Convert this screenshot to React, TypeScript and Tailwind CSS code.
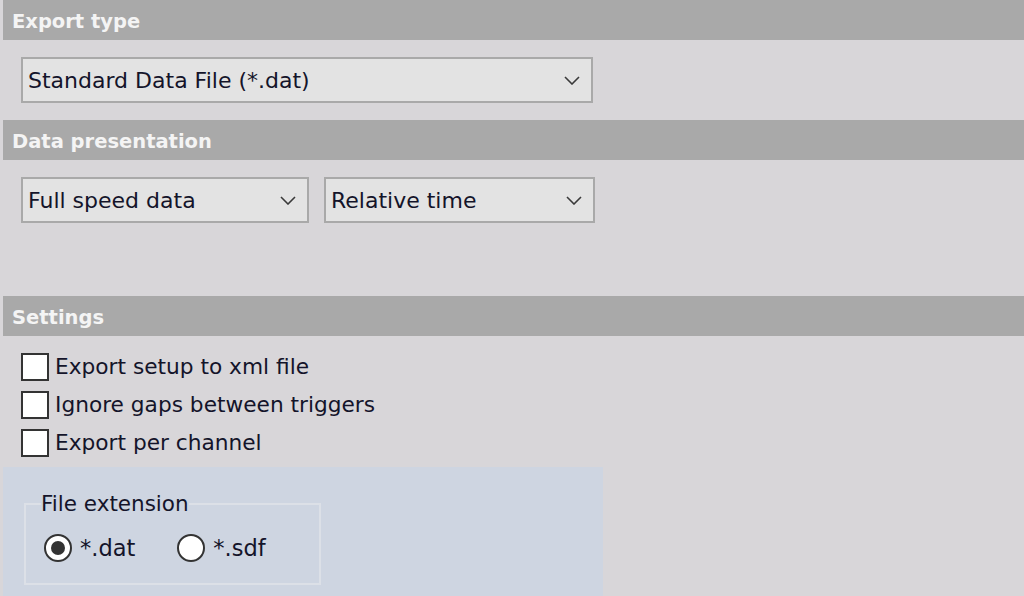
import { useState } from "react";

const font = { fontFamily: '"DejaVu Sans", Verdana, sans-serif' };

const Chevron = () => (
  <svg width="16" height="9" viewBox="0 0 16 9" fill="none" className="shrink-0">
    <path d="M1 1 L8 8 L15 1" stroke="#3a3a3a" strokeWidth="1.6" />
  </svg>
);

const SectionHeader: React.FC<{ title: string; className?: string }> = ({ title, className }) => (
  <div className={"h-[40px] bg-[#a9a9a9] flex items-center pl-[9px] pt-[3px] " + (className || "")}>
    <span className="text-[19.5px] font-bold text-[#f4f4f4] leading-none">{title}</span>
  </div>
);

const Combo: React.FC<{ value: string; width: string }> = ({ value, width }) => (
  <div className={"h-[46px] bg-[#e3e3e3] border-2 border-[#a9a9a9] flex items-center justify-between pl-[5px] pr-[11px] " + width}>
    <span className="text-[22px] text-[#14142a] leading-none pt-[1px]">{value}</span>
    <Chevron />
  </div>
);

const CheckRow: React.FC<{ label: string; checked: boolean; onToggle: () => void }> = ({ label, checked, onToggle }) => (
  <div className="flex items-center gap-[6px] h-[28px] cursor-default" onClick={onToggle}>
    <div className="w-[28px] h-[28px] bg-white border-2 border-[#333333] flex items-center justify-center">
      {checked && <span className="text-[18px] leading-none">✓</span>}
    </div>
    <span className="text-[21.7px] text-[#14142a] leading-none">{label}</span>
  </div>
);

const Radio: React.FC<{ label: string; checked: boolean; onSelect: () => void }> = ({ label, checked, onSelect }) => (
  <div className="flex items-center gap-[8px] cursor-default" onClick={onSelect}>
    <div className="w-[28px] h-[28px] rounded-full bg-white border-2 border-[#333333] flex items-center justify-center">
      {checked && <div className="w-[14px] h-[14px] rounded-full bg-[#333333]" />}
    </div>
    <span className="text-[22.5px] text-[#14142a] leading-none">{label}</span>
  </div>
);

export default function App() {
  const [checks, setChecks] = useState([false, false, false]);
  const [ext, setExt] = useState("dat");

  const toggle = (i: number) => setChecks((prev) => prev.map((c, j) => (j === i ? !c : c)));

  return (
    <div className="w-full h-[596px] bg-[#d8d6d9] overflow-hidden pl-[3px] flex flex-col" style={font}>
      <SectionHeader title="Export type" className="h-[39px]" />
      <div className="mt-[17px] pl-[18px]">
        <Combo value="Standard Data File (*.dat)" width="w-[572px]" />
      </div>

      <SectionHeader title="Data presentation" className="mt-[17px]" />
      <div className="mt-[17px] pl-[18px] flex gap-[15px]">
        <Combo value="Full speed data" width="w-[288px]" />
        <Combo value="Relative time" width="w-[271px]" />
      </div>

      <SectionHeader title="Settings" className="mt-[73px]" />
      <div className="mt-[17px] pl-[18px] flex flex-col gap-[10px]">
        <CheckRow label="Export setup to xml file" checked={checks[0]} onToggle={() => toggle(0)} />
        <CheckRow label="Ignore gaps between triggers" checked={checks[1]} onToggle={() => toggle(1)} />
        <CheckRow label="Export per channel" checked={checks[2]} onToggle={() => toggle(2)} />
      </div>

      <div className="mt-[10px] w-[600px] flex-1 bg-[#ced5e1] pl-[21px] pt-[24px]">
        <fieldset className="w-[297px] h-[94px] border-2 border-[#dce0e7] px-[17px]">
          <legend className="px-0 -ml-[2px] text-[21.5px] text-[#14142a] leading-[26px]">File extension</legend>
          <div className="flex items-center gap-[42px] mt-[17px] ml-[1px]">
            <Radio label="*.dat" checked={ext === "dat"} onSelect={() => setExt("dat")} />
            <Radio label="*.sdf" checked={ext === "sdf"} onSelect={() => setExt("sdf")} />
          </div>
        </fieldset>
      </div>
    </div>
  );
}
